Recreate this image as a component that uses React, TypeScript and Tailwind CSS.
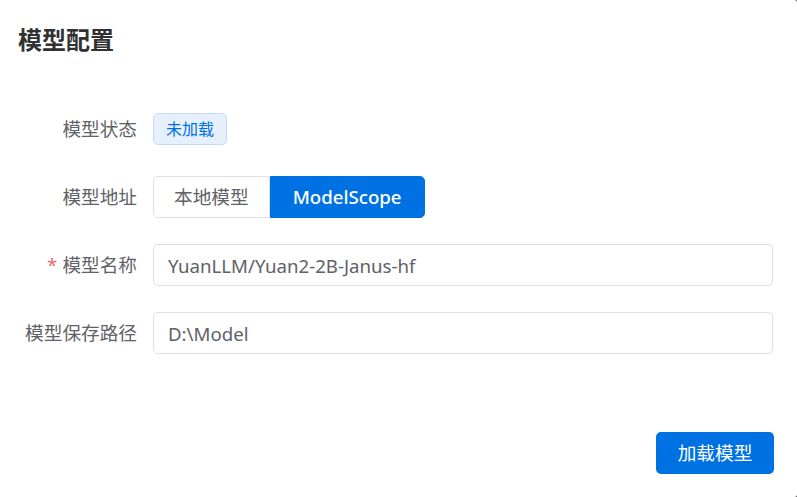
import React, { useState } from 'react';

const font = { fontFamily: '"Noto Sans", "Noto Sans CJK SC", sans-serif' };

const App: React.FC = () => {
  const [source, setSource] = useState<'local' | 'modelscope'>('modelscope');
  const [name, setName] = useState('YuanLLM/Yuan2-2B-Janus-hf');
  const [path, setPath] = useState('D:\\Model');

  return (
    <div className="w-[797px] h-[497px] bg-[#6b6b6b]" style={font}>
      <div className="w-full h-full bg-white rounded-r-[3px] flex flex-col">
        {/* Header */}
        <div className="pt-[24px] pl-[18px] h-[108px]">
          <h2 className="text-[24px] leading-[32px] font-bold text-[#303133]">模型配置</h2>
        </div>

        {/* Form */}
        <div className="grid grid-cols-[153px_1fr] auto-rows-[42px] gap-y-[26px] pr-[24px]">
          <label className="flex items-center justify-end pr-[16px] text-[18.67px] text-[#606266]">模型状态</label>
          <div className="flex items-center">
            <span className="h-[32px] px-[12px] flex items-center rounded-[5px] border border-[#c6dcf5] bg-[#e6f0fc] text-[16px] text-[#0071e3]">
              未加载
            </span>
          </div>

          <label className="flex items-center justify-end pr-[16px] text-[18.67px] text-[#606266]">模型地址</label>
          <div className="flex items-center">
            <button
              onClick={() => setSource('local')}
              className={`h-[42px] px-[20px] rounded-l-[5px] border text-[18.67px] ${
                source === 'local' ? 'bg-[#0071e3] border-[#0071e3] text-white' : 'bg-white border-[#dcdfe6] text-[#606266]'
              }`}
            >
              本地模型
            </button>
            <button
              onClick={() => setSource('modelscope')}
              className={`h-[42px] px-[22px] rounded-r-[5px] border text-[18.67px] font-medium ${
                source === 'modelscope' ? 'bg-[#0071e3] border-[#0071e3] text-white' : 'bg-white border-[#dcdfe6] text-[#606266]'
              }`}
            >
              ModelScope
            </button>
          </div>

          <label className="flex items-center justify-end pr-[16px] text-[18.67px] text-[#606266]">
            <span className="text-[#f56c6c] mr-[5px]">*</span>模型名称
          </label>
          <input
            value={name}
            onChange={e => setName(e.target.value)}
            className="h-[42px] w-full px-[14px] rounded-[5px] border border-[#dcdfe6] text-[18.67px] text-[#606266] outline-none"
          />

          <label className="flex items-center justify-end pr-[16px] text-[18.67px] text-[#606266]">模型保存路径</label>
          <input
            value={path}
            onChange={e => setPath(e.target.value)}
            className="h-[42px] w-full px-[14px] rounded-[5px] border border-[#dcdfe6] text-[18.67px] text-[#606266] outline-none"
          />
        </div>

        {/* Footer */}
        <div className="flex justify-end pr-[23px] mt-[78px]">
          <button className="h-[42px] w-[118px] rounded-[5px] bg-[#0071e3] text-white text-[18.67px]">加载模型</button>
        </div>
      </div>
    </div>
  );
};

export default App;
